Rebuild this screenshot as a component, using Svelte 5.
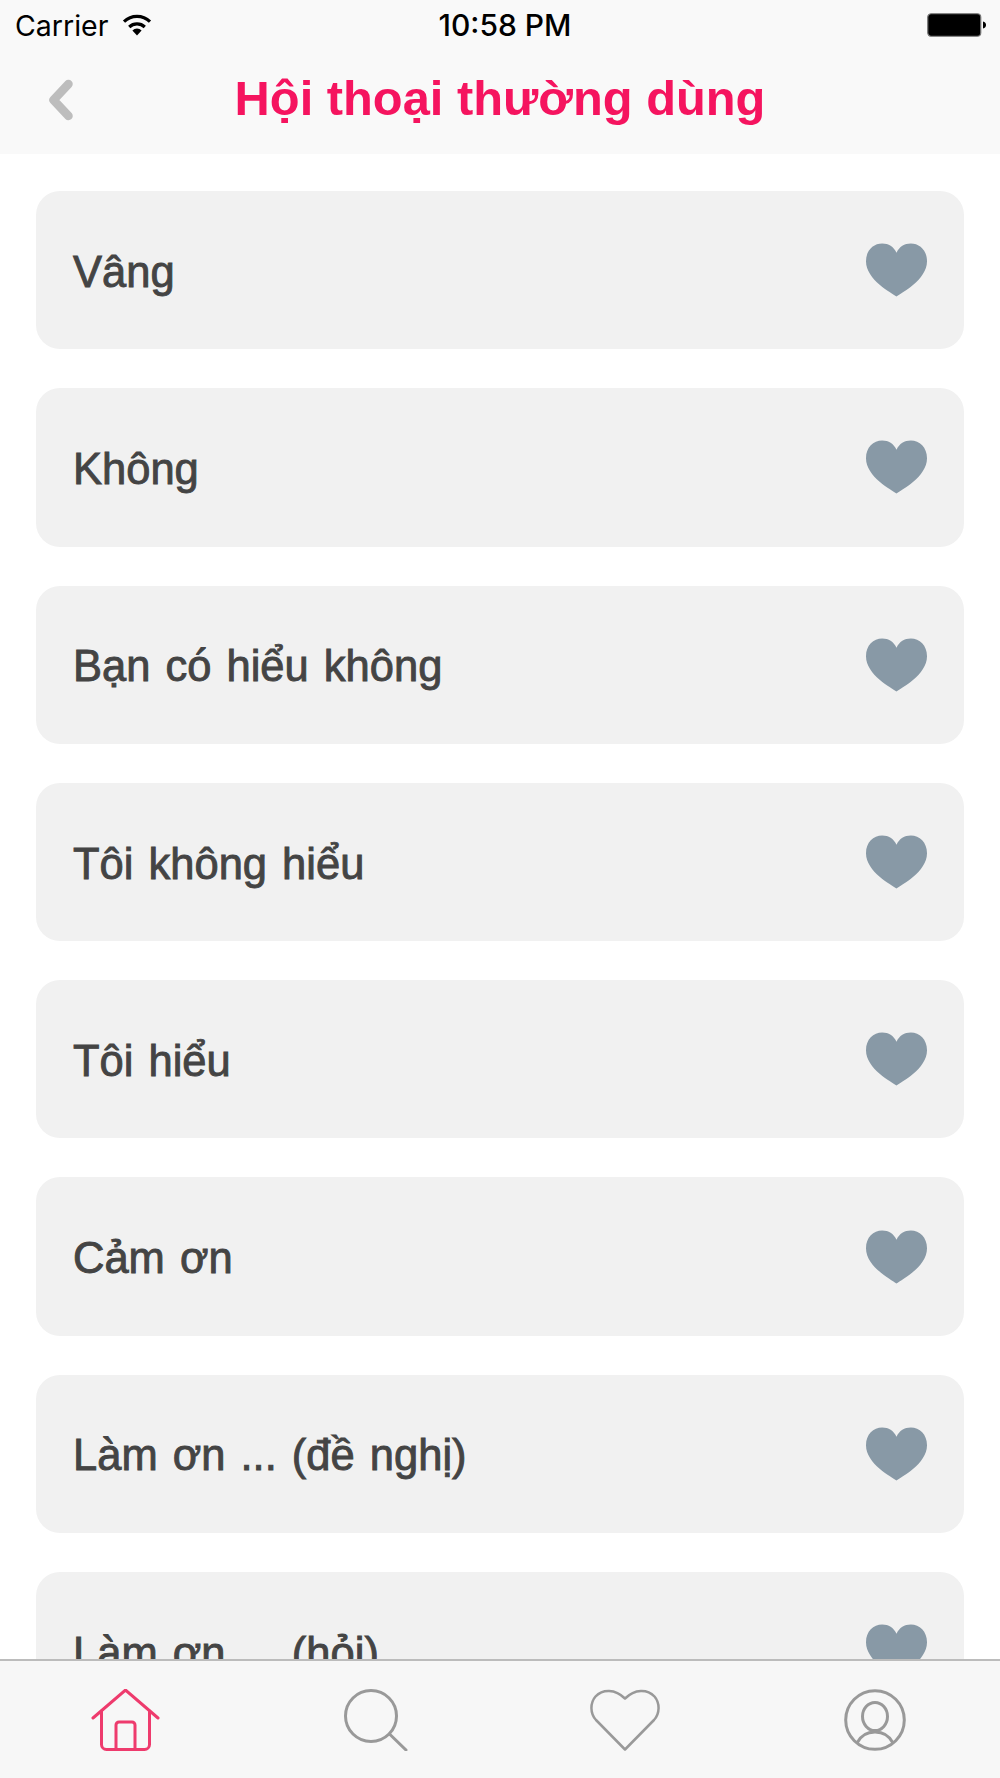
<script lang="ts">
	const phrases = [
		'Vâng',
		'Không',
		'Bạn có hiểu không',
		'Tôi không hiểu',
		'Tôi hiểu',
		'Cảm ơn',
		'Làm ơn ... (đề nghị)',
		'Làm ơn ... (hỏi)'
	];
</script>

<div class="screen">
	<header class="header">
		<div class="status">
			<div class="status__left">
				<span>Carrier</span>
				<svg class="wifi" viewBox="0 0 30 22" aria-hidden="true">
					<path d="M15 21.500 10.400 16.400a6.800 6.800 0 0 1 9.200 0z" fill="#000" />
					<path d="M7.200 13a11.500 11.500 0 0 1 15.600 0" fill="none" stroke="#000" stroke-width="3.200" />
					<path d="M2 7.600a19 19 0 0 1 26 0" fill="none" stroke="#000" stroke-width="3.200" />
				</svg>
			</div>
			<span class="status__time">10:58 PM</span>
			<svg class="battery" viewBox="0 0 60 24" aria-hidden="true">
				<rect x="0.75" y="0.75" width="53" height="22.5" rx="3.5" fill="#000" stroke="#777" stroke-width="1.2" />
				<path d="M56 8.500c2 .4 3 1.700 3 3.500s-1 3.100-3 3.500z" fill="#000" />
			</svg>
		</div>
		<div class="nav">
			<svg class="back" viewBox="0 0 26 42" aria-hidden="true">
				<path d="M20.500 5 5.500 21l15 16" fill="none" stroke="#bdbdbd" stroke-width="8.500" stroke-linecap="round" stroke-linejoin="round" />
			</svg>
			<h1>Hội thoại thường dùng</h1>
		</div>
	</header>

	<main class="list">
		{#each phrases as phrase}
			<div class="card">
				<span class="card__text">{phrase}</span>
				<svg class="heart" viewBox="0 0 62 54" aria-hidden="true">
					<path d="M31 54C26 50 0 37 0 18 0 7 7.500 0 16.500 0 23 0 28 3 31 9.500 34 3 39 0 45.500 0 54.500 0 62 7 62 18 62 37 36 50 31 54z" fill="#8899a6" />
				</svg>
			</div>
		{/each}
	</main>

	<nav class="tabs">
		<svg viewBox="0 0 70 62" class="tab tab--shifted" aria-hidden="true">
			<g fill="none" stroke="#ee3b6d" stroke-width="3" stroke-linecap="round" stroke-linejoin="round">
				<path d="M2 29 34.500 1 67 29" />
				<path d="M10.500 22v33.500a5 5 0 0 0 5 5h38a5 5 0 0 0 5-5V22" />
				<path d="M25 60.500V36a3 3 0 0 1 3-3h13a3 3 0 0 1 3 3v24.500" />
			</g>
		</svg>
		<svg viewBox="0 0 64 62" class="tab tab--shifted" aria-hidden="true">
			<g fill="none" stroke="#999" stroke-width="3" stroke-linecap="round">
				<circle cx="27" cy="27" r="25.500" />
				<path d="M45.500 45 62 61" />
			</g>
		</svg>
		<svg viewBox="0 0 70 62" class="tab" aria-hidden="true">
			<path d="M35 60.500 6 31C0 24.500 0 14 5.500 7.500 12.500 0 25 -.5 35 9.500 45 -.5 57.500 0 64.500 7.500 70 14 70 24.500 64 31z" fill="none" stroke="#999" stroke-width="2.500" stroke-linejoin="round" />
		</svg>
		<svg viewBox="0 0 62 62" class="tab" aria-hidden="true">
			<g fill="none" stroke="#999" stroke-width="3">
				<circle cx="31" cy="31" r="29.300" />
				<ellipse cx="31" cy="27.500" rx="12.500" ry="14" />
				<path d="M13 54c4-8 11-11 18-11s14 3 18 11" />
			</g>
		</svg>
	</nav>
</div>

<style>
	:global(body) {
		margin: 0;
		background: #fff;
	}

	.screen {
		position: relative;
		height: 1778px;
		overflow: hidden;
		display: flex;
		flex-direction: column;
		font-family: 'Inter', 'Liberation Sans', sans-serif;
	}

	.header {
		height: 154px;
		flex: none;
		background: #f9f9f9;
		display: flex;
		flex-direction: column;
	}

	.status {
		height: 50px;
		padding: 0 13px 0 15px;
		display: grid;
		grid-template-columns: 1fr auto 1fr;
		align-items: center;
		font-size: 28.5px;
		color: #000;
	}

	.status__left {
		display: flex;
		align-items: center;
		gap: 14px;
	}

	.status__time {
		font-size: 30px;
		font-weight: 500;
		padding-left: 8px;
	}

	.wifi {
		width: 30px;
		height: 22px;
	}

	.battery {
		width: 60px;
		height: 24px;
		justify-self: end;
	}

	.nav {
		position: relative;
		flex: 1;
		display: flex;
		align-items: center;
		justify-content: center;
		padding-bottom: 8px;
	}

	.back {
		position: absolute;
		left: 48px;
		top: 29px;
		width: 26px;
		height: 42px;
	}

	h1 {
		margin: 0;
		font-family: 'Liberation Sans', sans-serif;
		font-size: 48.8px;
		font-weight: 700;
		color: #f5145f;
	}

	.list {
		flex: 1;
		padding: 37px 36px 0;
		display: flex;
		flex-direction: column;
		gap: 39px;
	}

	.card {
		flex: none;
		height: 158.3px;
		border-radius: 24px;
		background: #f1f1f1;
		box-sizing: border-box;
		padding: 0 37px;
		display: flex;
		align-items: center;
		justify-content: space-between;
	}

	.card__text {
		font-family: 'Liberation Sans', sans-serif;
		font-size: 43.5px;
		word-spacing: 3px;
		color: #444;
		-webkit-text-stroke: 0.9px #444;
		padding-top: 4px;
	}

	.heart {
		width: 61px;
		height: 54px;
	}

	.tabs {
		position: absolute;
		left: 0;
		right: 0;
		bottom: 0;
		height: 119px;
		box-sizing: border-box;
		border-top: 2px solid #bcbcbc;
		background: #f7f7f7;
		display: grid;
		grid-template-columns: repeat(4, 250px);
		justify-items: center;
		padding-top: 28px;
	}

	.tab {
		height: 62px;
	}

	.tab--shifted {
		transform: translateX(1px);
	}
</style>
